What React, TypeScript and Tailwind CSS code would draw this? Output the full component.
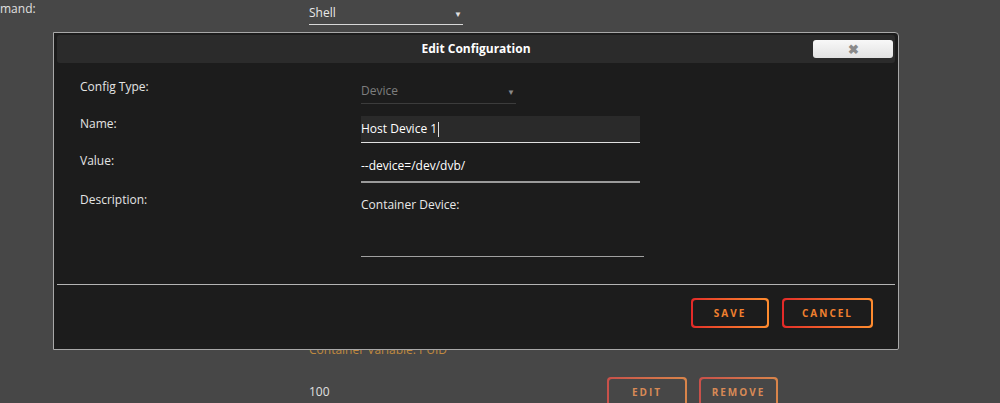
import { ReactNode } from "react";

const font = { fontFamily: '"Open Sans", "Noto Sans", sans-serif' };

function GradientButton({
  children,
  width,
  dim,
}: {
  children: ReactNode;
  width: string;
  dim?: boolean;
}) {
  return (
    <div
      className={`rounded-[4px] bg-gradient-to-r p-[2px] ${width} ${
        dim ? "from-[#c8504a] to-[#d9854a]" : "from-[#e22828] to-[#ff8c2f]"
      }`}
    >
      <div
        className={`flex h-[26px] items-center justify-center rounded-[3px] text-[10px] font-bold tracking-[2px] ${
          dim ? "bg-[#474747] text-[#d88a56]" : "bg-[#1c1c1c] text-[#f0802f]"
        }`}
      >
        {children}
      </div>
    </div>
  );
}

function Row({ label, children, h }: { label: string; children: ReactNode; h: string }) {
  return (
    <div className={`flex items-start ${h}`}>
      <div className="w-[281px] shrink-0 text-[12px] leading-4 text-[#e4e4e4]">{label}</div>
      {children}
    </div>
  );
}

export default function App() {
  return (
    <div className="relative h-[403px] w-[1000px] overflow-hidden bg-[#474747]" style={font}>
      {/* page behind the dialog */}
      <div className="grid grid-cols-[309px_1fr] pt-[1px]">
        <div className="text-[12px] leading-4 text-[#e0e0e0]">mand:</div>
        <div className="relative mt-[4px] w-[154px] border-b border-[#d8d8d8] pb-[3px] text-[12px] leading-4 text-[#e8e8e8]">
          Shell
          <span className="absolute right-[1px] top-[1px] text-[8px] text-[#e0e0e0]">▼</span>
        </div>
      </div>

      <div className="mt-[317px] grid grid-cols-[309px_298px_92px_1fr]">
        <div />
        <div className="col-span-3 text-[12px] leading-4 text-[#c08a40]">Container Variable: PUID</div>
      </div>
      <div className="mt-[19px] grid grid-cols-[309px_298px_92px_1fr] items-start">
        <div />
        <div className="pt-[7px] text-[12px] leading-4 text-[#e0e0e0]">100</div>
        <GradientButton width="w-[80px]" dim>
          EDIT
        </GradientButton>
        <GradientButton width="w-[79px]" dim>
          REMOVE
        </GradientButton>
      </div>

      {/* dialog */}
      <div className="absolute left-[53px] top-[32px] flex h-[318px] w-[846px] flex-col rounded-tr-[4px] rounded-br-[2px] border border-[#a8a8a8] bg-[#1c1c1c]">
        <div className="relative mx-[3px] mt-[2px] flex h-[28px] items-center justify-center rounded-[3px] bg-[#2b2b2b]">
          <span className="text-[12px] font-bold text-white">Edit Configuration</span>
          <button className="absolute right-[2px] top-[5px] flex h-[18px] w-[80px] items-center justify-center rounded-[3px] bg-gradient-to-b from-[#f8f8f8] to-[#e2e2e2] text-[13px] font-bold leading-none text-[#8a8a8a]">
            ✖
          </button>
        </div>

        <div className="mt-[16px] flex flex-col pl-[26px]">
          <Row label="Config Type:" h="h-[37px]">
            <div className="relative w-[155px] border-b border-[#3c3c3c] pb-[4px] pt-[4px] text-[12px] leading-4 text-[#7e7e7e]">
              Device
              <span className="absolute right-[1px] top-[5px] text-[8px] text-[#8a8a8a]">▼</span>
            </div>
          </Row>
          <Row label="Name:" h="h-[37px]">
            <div className="flex w-[279px] items-center border-b border-[#e0e0e0] bg-[#2a2a2a] pb-[5px] pt-[5px] text-[12px] leading-4 text-white">
              Host Device 1<span className="ml-[1px] inline-block h-[15px] w-[1px] bg-[#e0e0e0]" />
            </div>
          </Row>
          <Row label="Value:" h="h-[39px]">
            <div className="w-[279px] border-b-2 border-[#9a9a9a] pb-[7px] pt-[5px] text-[12px] leading-4 text-white">
              --device=/dev/dvb/
            </div>
          </Row>
          <Row label="Description:" h="h-[65px]">
            <div className="h-[65px] w-[283px] border-b border-[#a0a0a0] pt-[5px] text-[12px] leading-4 text-[#e8e8e8]">
              Container Device:
            </div>
          </Row>
        </div>

        <div className="mx-[3px] mt-[27px] h-[1px] bg-[#b4b4b4]" />

        <div className="mr-[25px] mt-[13px] flex justify-end gap-[13px]">
          <GradientButton width="w-[78px]">SAVE</GradientButton>
          <GradientButton width="w-[91px]">CANCEL</GradientButton>
        </div>
      </div>
    </div>
  );
}
